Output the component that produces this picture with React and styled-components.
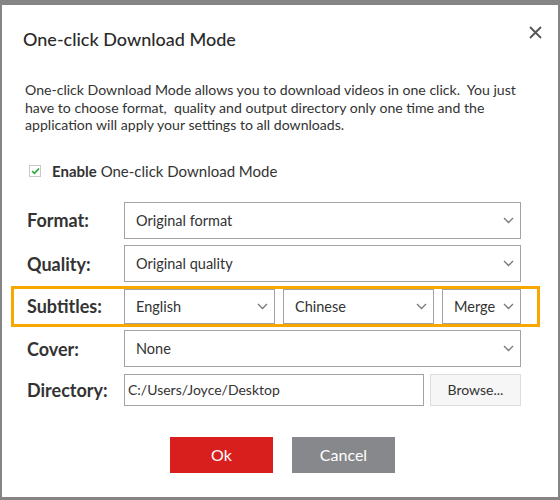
import React from "react";
import styled, { createGlobalStyle } from "styled-components";

const Global = createGlobalStyle`
	html, body {
		margin: 0;
		padding: 0;
		background: #ffffff;
	}
	* {
		box-sizing: border-box;
	}
`;

function Chevron() {
	return (
		<svg width="11" height="7" viewBox="0 0 11 7">
			<path d="M1 1 L5.5 5.5 L10 1" fill="none" stroke="#777" strokeWidth="1.3" />
		</svg>
	);
}

function Select({ value, width }) {
	return (
		<SelectBox style={width ? { width: `${width}px`, flex: "none" } : undefined}>
			<span>{value}</span>
			<Chevron />
		</SelectBox>
	);
}

function App() {
	return (
		<>
			<Global />
			<Frame>
				<Header>
					<h1 className="title">One-click Download Mode</h1>
					<CloseButton aria-label="close">
						<svg width="13" height="13" viewBox="0 0 13 13">
							<path d="M1 1 L12 12 M12 1 L1 12" stroke="#555" strokeWidth="1.8" />
						</svg>
					</CloseButton>
				</Header>

				<Description>
					One-click Download Mode allows you to download videos in one click.&nbsp; You just
					have to choose format,&nbsp; quality and output directory only one time and the
					application will apply your settings to all downloads.
				</Description>

				<CheckRow>
					<CheckBox>
						<svg width="9" height="8" viewBox="0 0 9 8">
							<path d="M1 4 L3.5 6.3 L8 1.5" fill="none" stroke="#2aa63a" strokeWidth="1.6" />
						</svg>
					</CheckBox>
					<span>
						<b>Enable</b> One-click Download Mode
					</span>
				</CheckRow>

				<Form>
					<Row $h={37}>
						<Label>Format:</Label>
						<Select value="Original format" />
					</Row>
					<Row $h={37}>
						<Label>Quality:</Label>
						<Select value="Original quality" />
					</Row>
					<Row $h={35} $highlight>
						<Label>Subtitles:</Label>
						<Select value="English" width={151} />
						<Select value="Chinese" width={151} />
						<Select value="Merge" />
					</Row>
					<Row $h={37}>
						<Label>Cover:</Label>
						<Select value="None" />
					</Row>
					<Row $h={32}>
						<Label>Directory:</Label>
						<PathInput>C:/Users/Joyce/Desktop</PathInput>
						<BrowseButton>Browse...</BrowseButton>
					</Row>
				</Form>

				<Footer>
					<ActionButton $bg="#d91e1e">Ok</ActionButton>
					<ActionButton $bg="#87888b">Cancel</ActionButton>
				</Footer>
			</Frame>
		</>
	);
}

const Frame = styled.div`
	position: relative;
	width: 560px;
	height: 500px;
	background: #ffffff;
	border-top: 5px solid #858585;
	border-left: 2px solid #858585;
	border-right: 2px solid #858585;
	border-bottom: 3px solid #858585;
	font-family: Lato, "Noto Sans", sans-serif;
	color: #333333;

	b {
		font-weight: 700;
	}
`;

const Header = styled.div`
	display: flex;
	justify-content: space-between;
	align-items: flex-start;
	padding: 22px 16px 0 21px;

	.title {
		margin: 0;
		font-size: 18px;
		font-weight: 500;
		line-height: 24px;
		color: #2b2b2b;
	}
`;

const CloseButton = styled.button`
	border: none;
	background: none;
	padding: 0;
	margin-top: -1px;
	width: 13px;
	height: 13px;
	display: flex;
	cursor: pointer;
`;

const Description = styled.p`
	margin: 30px 20px 0 23px;
	font-size: 14.1px;
	line-height: 17.5px;
	color: #333333;
`;

const CheckRow = styled.div`
	display: flex;
	align-items: center;
	gap: 11px;
	margin: 27px 0 0 27px;
	font-size: 15px;
	line-height: 20px;
	color: #333333;
`;

const CheckBox = styled.span`
	width: 12px;
	height: 12px;
	border: 1px solid #c8c8c8;
	display: flex;
	align-items: center;
	justify-content: center;
	background: #ffffff;
`;

const Form = styled.div`
	display: flex;
	flex-direction: column;
	gap: 6.5px;
	margin: 21px 37px 0 25px;
`;

const Row = styled.div`
	position: relative;
	display: flex;
	align-items: center;
	gap: 8px;
	height: ${(p) => p.$h}px;

	&::before {
		content: "";
		display: ${(p) => (p.$highlight ? "block" : "none")};
		position: absolute;
		top: -3px;
		bottom: -3px;
		left: -16px;
		right: -19px;
		border: 3px solid #f7a700;
		pointer-events: none;
	}
`;

const Label = styled.div`
	width: 89px;
	flex: none;
	font-size: 18px;
	font-weight: 700;
	color: #333333;
`;

const SelectBox = styled.div`
	flex: 1;
	height: 100%;
	display: flex;
	align-items: center;
	justify-content: space-between;
	padding: 0 6px 0 11px;
	border: 1px solid #a3a3a3;
	background: #ffffff;
	font-size: 14.5px;
	color: #333333;

	svg {
		flex: none;
	}
`;

const PathInput = styled.div`
	flex: 1;
	height: 100%;
	display: flex;
	align-items: center;
	padding: 0 3px;
	border: 1px solid #a3a3a3;
	font-size: 14px;
	color: #333333;
`;

const BrowseButton = styled.button`
	width: 91px;
	height: 100%;
	margin-left: -2px;
	border: 1px solid #dcdcdc;
	background: #f6f6f6;
	font-family: Lato, "Noto Sans", sans-serif;
	font-size: 14px;
	color: #333333;
`;

const Footer = styled.div`
	display: flex;
	justify-content: center;
	gap: 19px;
	margin-top: 31px;
	padding-left: 5px;
`;

const ActionButton = styled.button`
	width: 103px;
	height: 36px;
	border: none;
	background: ${(p) => p.$bg};
	color: #ffffff;
	font-family: Lato, "Noto Sans", sans-serif;
	font-size: 16px;
	cursor: pointer;
`;

export default App;
